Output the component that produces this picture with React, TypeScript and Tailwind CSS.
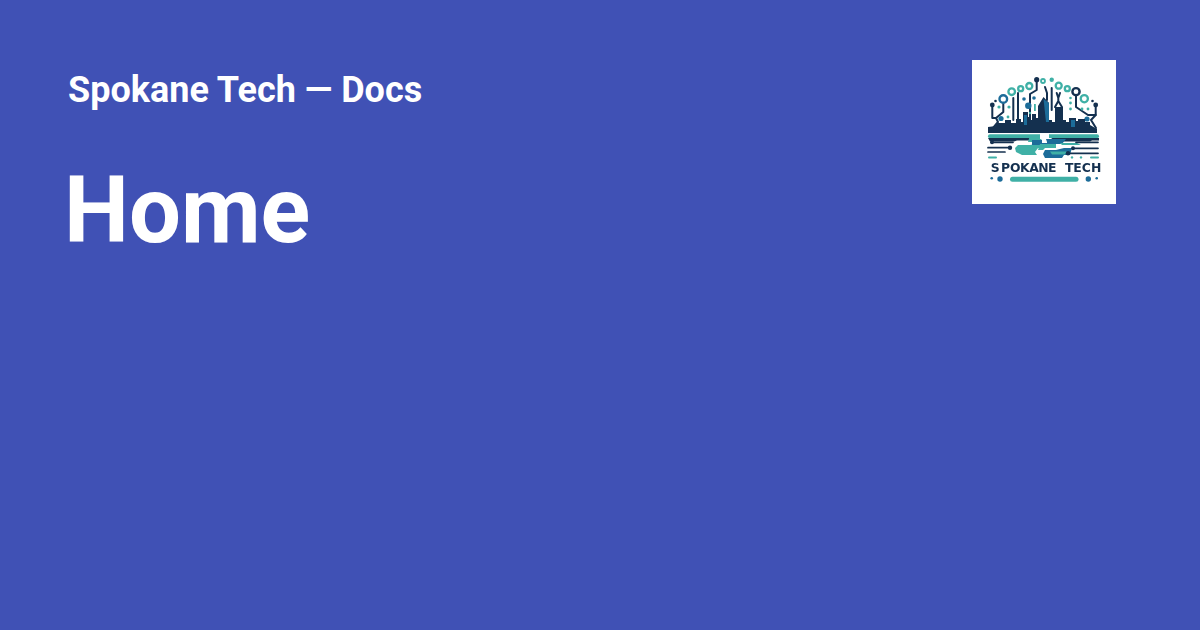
const NAVY = "#14304f";
const TEAL = "#3fb0a6";
const BLUE = "#1c6c99";

function Ring({ x, y, r, color, w = 2.3 }: { x: number; y: number; r: number; color: string; w?: number }) {
  return <circle cx={x} cy={y} r={r} fill="none" stroke={color} strokeWidth={w} />;
}

function Dot({ x, y, r, color }: { x: number; y: number; r: number; color: string }) {
  return <circle cx={x} cy={y} r={r} fill={color} />;
}

function Logo() {
  return (
    <svg viewBox="0 0 144 144" className="h-36 w-36 shrink-0 bg-white">
      <g className="blur-[0.45px]">
        {/* circuit traces */}
        <g fill="none" stroke={NAVY} strokeWidth="2" strokeLinecap="round" strokeLinejoin="round">
          <path d="M20.3 45V58H24L26 62L21 68" />
          <path d="M31.3 43V52L24 58" />
          <path d="M41.3 38V60" />
          <path d="M46 33V60" />
          <path d="M64.7 20V30L58 34V60" />
          <path d="M73 27L75 33V40" />
          <path d="M79.7 28V50" />
          <path d="M84.7 33L86.3 38L88 33M86.3 38V41L83 47M86.3 41L90 47" />
          <path d="M104 35V47L116 55H123.7V45" />
          <path d="M123.7 55L119 60L124 68" />
        </g>
        <Dot x={64.7} y={19.7} r={2.6} color={NAVY} />
        <Dot x={20.3} y={45} r={2.4} color={NAVY} />
        <Dot x={123.7} y={45} r={2.4} color={NAVY} />
        <Ring x={31.3} y={39} r={3.8} color={BLUE} w={2.4} />
        <Ring x={104} y={31.7} r={3.6} color={NAVY} w={2.4} />
        <Dot x={56.3} y={45.7} r={3.2} color={BLUE} />
        {/* teal nodes over the top */}
        <Ring x={39.7} y={31.7} r={3.3} color={TEAL} />
        <Ring x={48.7} y={28.7} r={2.5} color={TEAL} />
        <Ring x={57.3} y={26} r={3} color={TEAL} />
        <Ring x={71} y={21} r={2} color={TEAL} w={1.8} />
        <Ring x={86.7} y={25.7} r={3} color={TEAL} />
        <Ring x={95.3} y={28.7} r={2.5} color={TEAL} />
        <Ring x={112.3} y={38.7} r={3.6} color={TEAL} />
        <Dot x={79.7} y={19.7} r={2.2} color={TEAL} />
        <Dot x={27} y={47} r={1.6} color={TEAL} />
        <Dot x={37} y={47} r={1.6} color={TEAL} />
        <Dot x={52} y={39} r={1.8} color={BLUE} />
        <Dot x={62} y={38} r={1.8} color={BLUE} />
        <Dot x={23.5} y={41} r={1.3} color={NAVY} />
        <Dot x={29} y={58.5} r={2.6} color={BLUE} />
        <Dot x={36} y={57} r={1.4} color={TEAL} />
        <Dot x={98.5} y={38} r={1.3} color={TEAL} />
        <Dot x={98.5} y={43} r={1.4} color={TEAL} />
        <Dot x={98.5} y={49} r={1.4} color={TEAL} />
        <Dot x={110} y={49} r={1.4} color={TEAL} />
        <Dot x={116} y={49} r={1.4} color={TEAL} />
        <Dot x={115} y={59} r={2.6} color={BLUE} />
        <Dot x={120.5} y={41} r={1.3} color={NAVY} />
        <Dot x={58} y={53} r={1.2} color={TEAL} />
        <rect x="62" y="44" width="1.8" height="7" fill={TEAL} />
        {/* skyline */}
        <path
          fill={NAVY}
          d="M16 67L24 66V63H33V60H39V63H44V59H49V62H51V52H56V57H57V60H60V54H64V58H66V46L71.5 37L77 43V60H80V62H83V47H91V60H94V62H97V58H104V61H106V59H113V62H118V65L125 69V73H16Z"
        />
        <path fill={BLUE} d="M71.5 39L77 43V62H74Z" />
        <path fill={BLUE} d="M99 60H103V67H99Z" />
        <path fill={BLUE} d="M52 55H55V65H52Z" />
        {/* river */}
        <rect x="16" y="74.3" width="111" height="3.8" rx="1.9" fill={TEAL} />
        <rect x="68" y="73.5" width="9" height="5" fill="#ffffff" />
        <path fill={NAVY} d="M16 78H63L65 80.5H45L42 81.5H18ZM79 78H127V80.5H120L118 81.5H84Z" />
        <path fill={TEAL} d="M58 75H68V79H70L66 82H56ZM46 85H58L64 84H70V88H66L63 92L65 95H50L44 92L43 88Z" />
        <path fill={BLUE} d="M60 80H70V83H76V85H60Z" />
        <path fill={BLUE} d="M74 79H94L90 84H82L79 88H75V82Z" />
        <path fill={TEAL} d="M68 84H84V88H73L71 90H66Z" />
        <path fill={BLUE} d="M73 90H84L92 88H100L98 95H92L90 98H73L71 94Z" />
        <path fill={TEAL} d="M78 91.5H95L93 94.5H80Z" />
        <path fill={TEAL} d="M88 83H105L109 85H90Z" />
        {/* side traces */}
        <g fill="none" stroke={NAVY} strokeWidth="1.7" strokeLinecap="round">
          <path d="M20 82.3H41" />
          <path d="M16 87.7H38" />
          <path d="M16 92H33" />
          <path d="M104 82.3H126" />
          <path d="M101 88.3H126" />
          <path d="M96 93.3H126" />
        </g>
        <Dot x={20} y={82.3} r={2} color={NAVY} />
        <Dot x={38} y={87.7} r={2.2} color={NAVY} />
        <Dot x={101} y={88.3} r={2} color={NAVY} />
        <Dot x={96} y={93.3} r={2.2} color={NAVY} />
        <rect x="16" y="96.4" width="9" height="2" rx="1" fill={TEAL} />
        <rect x="118" y="96.4" width="9" height="2" rx="1" fill={TEAL} />
        <Dot x={100} y={97.4} r={1.2} color={TEAL} />
        <Dot x={109} y={97.4} r={1.2} color={TEAL} />
        <text
          x="18.7 29 38 48 57.3 66.3 76 81.3 93 101.3 109.7 119"
          y="111.7"
          fill={NAVY}
          fontFamily="'DejaVu Sans', sans-serif"
          fontWeight="700"
          fontSize="12.4"
        >
          SPOKANE TECH
        </text>
        {/* bottom line */}
        <Dot x={19.7} y={118.3} r={1.3} color={BLUE} />
        <Dot x={28} y={119} r={2.7} color={BLUE} />
        <rect x="38" y="116.7" width="68.5" height="5" rx="2.5" fill={TEAL} />
        <Dot x={116.3} y={119} r={2.7} color={BLUE} />
        <Dot x={124.7} y={118.3} r={1.3} color={BLUE} />
      </g>
    </svg>
  );
}

export default function App() {
  return (
    <div className="flex h-[630px] w-[1200px] items-start justify-between overflow-hidden bg-[#4051b5] pt-[60px] pr-[84px] pl-[64px] font-['Roboto',sans-serif] text-white">
      <div>
        <div className="pl-[4px] text-[36px] leading-[60px] font-bold">Spokane Tech — Docs</div>
        <h1 className="mt-[36px] text-[92px] leading-[110px] font-bold">Home</h1>
      </div>
      <Logo />
    </div>
  );
}
